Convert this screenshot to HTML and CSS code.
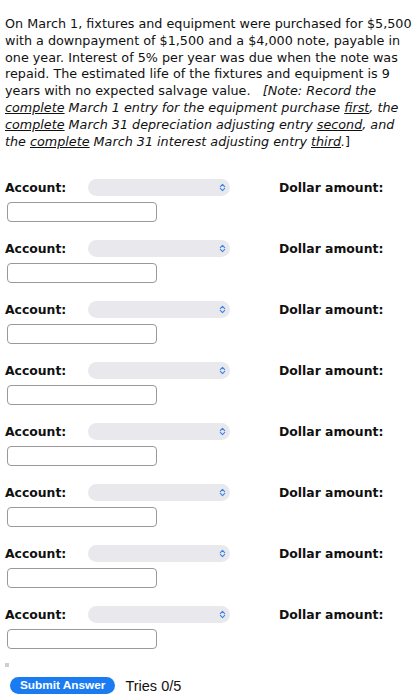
FILE: index.html
```html
<!DOCTYPE html>
<html>
<head>
<meta charset="utf-8">
<link rel="stylesheet" href="styles.css">
</head>
<body>
<p class="problem">On March 1, fixtures and equipment were purchased for $5,500 with a downpayment of $1,500 and a $4,000 note, payable in one year. Interest of 5% per year was due when the note was repaid. The estimated life of the fixtures and equipment is 9 years with no expected salvage value.&nbsp;&nbsp; <i>[Note: Record the <u>complete</u> March 1 entry for the equipment purchase <u>first</u>, the <u>complete</u> March 31 depreciation adjusting entry <u>second</u>, and the <u>complete</u> March 31 interest adjusting entry <u>third</u>.</i>]</p>

<div class="rows">
  <div class="row">
    <div class="line"><span class="lbl acc">Account:</span><span class="sel"><svg class="arr" viewBox="0 0 8 10" width="7" height="9"><path d="M1.5 4 L4 1.5 L6.5 4 M1.5 6 L4 8.5 L6.5 6" fill="none" stroke="#3b82e6" stroke-width="1.3" stroke-linecap="round" stroke-linejoin="round"/></svg></span><span class="lbl amt">Dollar amount:</span></div>
    <div class="inp"></div>
  </div>
  <div class="row">
    <div class="line"><span class="lbl acc">Account:</span><span class="sel"><svg class="arr" viewBox="0 0 8 10" width="7" height="9"><path d="M1.5 4 L4 1.5 L6.5 4 M1.5 6 L4 8.5 L6.5 6" fill="none" stroke="#3b82e6" stroke-width="1.3" stroke-linecap="round" stroke-linejoin="round"/></svg></span><span class="lbl amt">Dollar amount:</span></div>
    <div class="inp"></div>
  </div>
  <div class="row">
    <div class="line"><span class="lbl acc">Account:</span><span class="sel"><svg class="arr" viewBox="0 0 8 10" width="7" height="9"><path d="M1.5 4 L4 1.5 L6.5 4 M1.5 6 L4 8.5 L6.5 6" fill="none" stroke="#3b82e6" stroke-width="1.3" stroke-linecap="round" stroke-linejoin="round"/></svg></span><span class="lbl amt">Dollar amount:</span></div>
    <div class="inp"></div>
  </div>
  <div class="row">
    <div class="line"><span class="lbl acc">Account:</span><span class="sel"><svg class="arr" viewBox="0 0 8 10" width="7" height="9"><path d="M1.5 4 L4 1.5 L6.5 4 M1.5 6 L4 8.5 L6.5 6" fill="none" stroke="#3b82e6" stroke-width="1.3" stroke-linecap="round" stroke-linejoin="round"/></svg></span><span class="lbl amt">Dollar amount:</span></div>
    <div class="inp"></div>
  </div>
  <div class="row">
    <div class="line"><span class="lbl acc">Account:</span><span class="sel"><svg class="arr" viewBox="0 0 8 10" width="7" height="9"><path d="M1.5 4 L4 1.5 L6.5 4 M1.5 6 L4 8.5 L6.5 6" fill="none" stroke="#3b82e6" stroke-width="1.3" stroke-linecap="round" stroke-linejoin="round"/></svg></span><span class="lbl amt">Dollar amount:</span></div>
    <div class="inp"></div>
  </div>
  <div class="row">
    <div class="line"><span class="lbl acc">Account:</span><span class="sel"><svg class="arr" viewBox="0 0 8 10" width="7" height="9"><path d="M1.5 4 L4 1.5 L6.5 4 M1.5 6 L4 8.5 L6.5 6" fill="none" stroke="#3b82e6" stroke-width="1.3" stroke-linecap="round" stroke-linejoin="round"/></svg></span><span class="lbl amt">Dollar amount:</span></div>
    <div class="inp"></div>
  </div>
  <div class="row">
    <div class="line"><span class="lbl acc">Account:</span><span class="sel"><svg class="arr" viewBox="0 0 8 10" width="7" height="9"><path d="M1.5 4 L4 1.5 L6.5 4 M1.5 6 L4 8.5 L6.5 6" fill="none" stroke="#3b82e6" stroke-width="1.3" stroke-linecap="round" stroke-linejoin="round"/></svg></span><span class="lbl amt">Dollar amount:</span></div>
    <div class="inp"></div>
  </div>
  <div class="row">
    <div class="line"><span class="lbl acc">Account:</span><span class="sel"><svg class="arr" viewBox="0 0 8 10" width="7" height="9"><path d="M1.5 4 L4 1.5 L6.5 4 M1.5 6 L4 8.5 L6.5 6" fill="none" stroke="#3b82e6" stroke-width="1.3" stroke-linecap="round" stroke-linejoin="round"/></svg></span><span class="lbl amt">Dollar amount:</span></div>
    <div class="inp"></div>
  </div>
</div>

<div class="marker"></div>
<div class="submit">
  <span class="btn">Submit Answer</span>
  <span class="tries">Tries 0/5</span>
</div>
</body>
</html>
```

FILE: styles.css
```css
html, body {
  margin: 0;
  padding: 0;
  background: #fff;
}
body {
  font-family: "DejaVu Sans", Verdana, sans-serif;
  color: #111;
  padding: 0 5px;
}
.problem {
  margin: 16px 0 0 0;
  width: 411px;
  font-size: 12.75px;
  line-height: 16.8px;
}
.rows {
  margin-top: 29px;
}
.row {
  height: 61px;
}
.line {
  display: flex;
  align-items: center;
  height: 17px;
}
.lbl {
  font-weight: bold;
  font-size: 12.4px;
}
.acc {
  width: 83px;
}
.sel {
  width: 142px;
  height: 17px;
  border-radius: 9px;
  background: #e9e9ed;
  display: flex;
  align-items: center;
  justify-content: flex-end;
  padding-right: 4px;
  box-sizing: border-box;
}
.arr {
  display: block;
}
.amt {
  margin-left: 49px;
}
.inp {
  margin: 6px 0 0 2px;
  width: 150px;
  height: 20px;
  box-sizing: border-box;
  border: 1px solid #999;
  border-radius: 4px;
}
.marker {
  width: 4px;
  height: 4px;
  background: #cfcfcf;
  margin-top: -4px;
}
.submit {
  display: flex;
  align-items: center;
  margin-top: 10px;
  margin-left: 5px;
}
.btn {
  background: #1a7cf0;
  color: #fff;
  font-family: "Liberation Sans", Arial, sans-serif;
  font-weight: bold;
  font-size: 11.8px;
  height: 17px;
  line-height: 17px;
  padding: 0 10px;
  border-radius: 9px;
}
.tries {
  font-family: "Liberation Sans", Arial, sans-serif;
  font-size: 14.5px;
  margin-left: 10px;
}
```
